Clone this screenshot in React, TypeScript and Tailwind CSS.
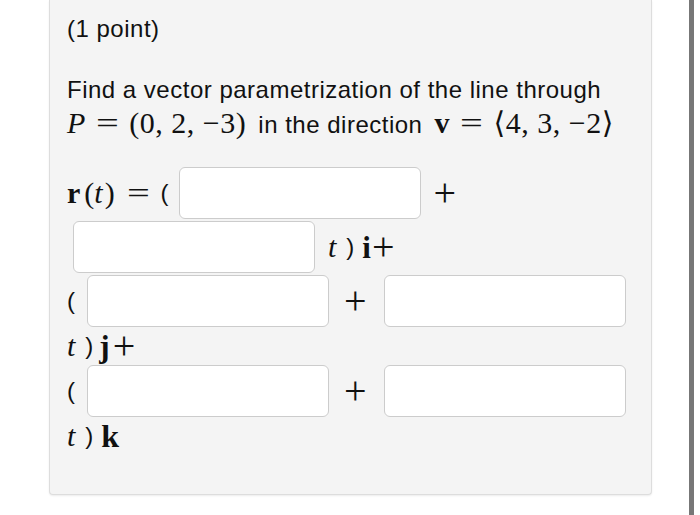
import React from 'react';

const sans = "font-['Liberation_Sans',Arial,sans-serif]";
const serif = "font-['Liberation_Serif','DejaVu_Serif',serif]";

function AnswerBox({ className = '' }: { className?: string }) {
  return (
    <input
      type="text"
      className={`h-[52px] w-[242px] shrink-0 rounded-[6px] border-[1.5px] border-[#cccccc] bg-white outline-none ${className}`}
    />
  );
}

// wide thin "=" like the math font
function Eq({ className = '' }: { className?: string }) {
  return <span className={`inline-block scale-x-[1.35] ${className}`}>=</span>;
}

function Plus({ className = '' }: { className?: string }) {
  return <span className={`${serif} text-[40px] leading-none ${className}`}>+</span>;
}

export default function App() {
  return (
    <div className={`flex h-[515px] w-[700px] bg-white text-[#111111] ${sans}`}>
      <div className="ml-[49px] h-[495px] w-[603px] shrink-0 rounded-b-[4px] border-x border-b border-[#dddddd] bg-[#f4f4f4] pl-[17px] pt-[14px] shadow-[0_1px_2px_rgba(0,0,0,0.08)]">
        <p className="text-[24px] leading-[30px] tracking-[0.5px]">(1 point)</p>

        <p className="mt-[28px] text-[24px] leading-[35px] tracking-[0.5px]">
          Find a vector parametrization of the line through
          <br />
          <span className={`${serif} mr-[5px] text-[30px] leading-none tracking-[0.5px]`}>
            <i>P</i>
            <Eq className="mx-[13px]" />
            (0,&nbsp;2,&nbsp;−3)
          </span>{' '}
          in the direction{' '}
          <span className={`${serif} ml-[5px] text-[30px] leading-none tracking-[0.5px]`}>
            <b>v</b>
            <Eq className="mx-[13px]" />
            ⟨4,&nbsp;3,&nbsp;−2⟩
          </span>
        </p>

        <div className="mt-[25px] flex h-[52px] items-center">
          <span className={`${serif} text-[30px] leading-none`}>
            <b>r</b>
            <span className="ml-[4px]">(</span>
            <i>t</i>
            <span className="ml-[2px]">)</span>
            <Eq className="ml-[15px]" />
          </span>
          <span className="ml-[14px] text-[24px]">(</span>
          <AnswerBox className="ml-[10px]" />
          <Plus className="ml-[13px]" />
        </div>

        <div className="mt-[2px] flex h-[52px] items-center">
          <AnswerBox className="ml-[6px]" />
          <span className={`${serif} ml-[13px] text-[30px] leading-none`}>
            <i>t</i>
          </span>
          <span className="ml-[10px] text-[24px]">)</span>
          <span className={`${serif} ml-[8px] text-[31px] leading-none`}>
            <b>i</b>
          </span>
          <Plus className="ml-[1px]" />
        </div>

        <div className="mt-[2px] flex h-[52px] items-center">
          <span className="text-[24px]">(</span>
          <AnswerBox className="ml-[12px]" />
          <Plus className="ml-[15px]" />
          <AnswerBox className="ml-[17px]" />
        </div>

        <div className="flex h-[38px] items-center">
          <span className={`${serif} text-[30px] leading-none`}>
            <i>t</i>
          </span>
          <span className="ml-[10px] text-[24px]">)</span>
          <span className={`${serif} ml-[6px] text-[31px] leading-none`}>
            <b>j</b>
          </span>
          <Plus className="ml-[3px]" />
        </div>

        <div className="flex h-[52px] items-center">
          <span className="text-[24px]">(</span>
          <AnswerBox className="ml-[12px]" />
          <Plus className="ml-[15px]" />
          <AnswerBox className="ml-[17px]" />
        </div>

        <div className="flex h-[38px] items-center">
          <span className={`${serif} text-[30px] leading-none`}>
            <i>t</i>
          </span>
          <span className="ml-[10px] text-[24px]">)</span>
          <span className={`${serif} ml-[8px] text-[32px] leading-none`}>
            <b>k</b>
          </span>
        </div>
      </div>
      <div className="ml-[37px] h-full w-[5px] bg-[#777777]" />
    </div>
  );
}
